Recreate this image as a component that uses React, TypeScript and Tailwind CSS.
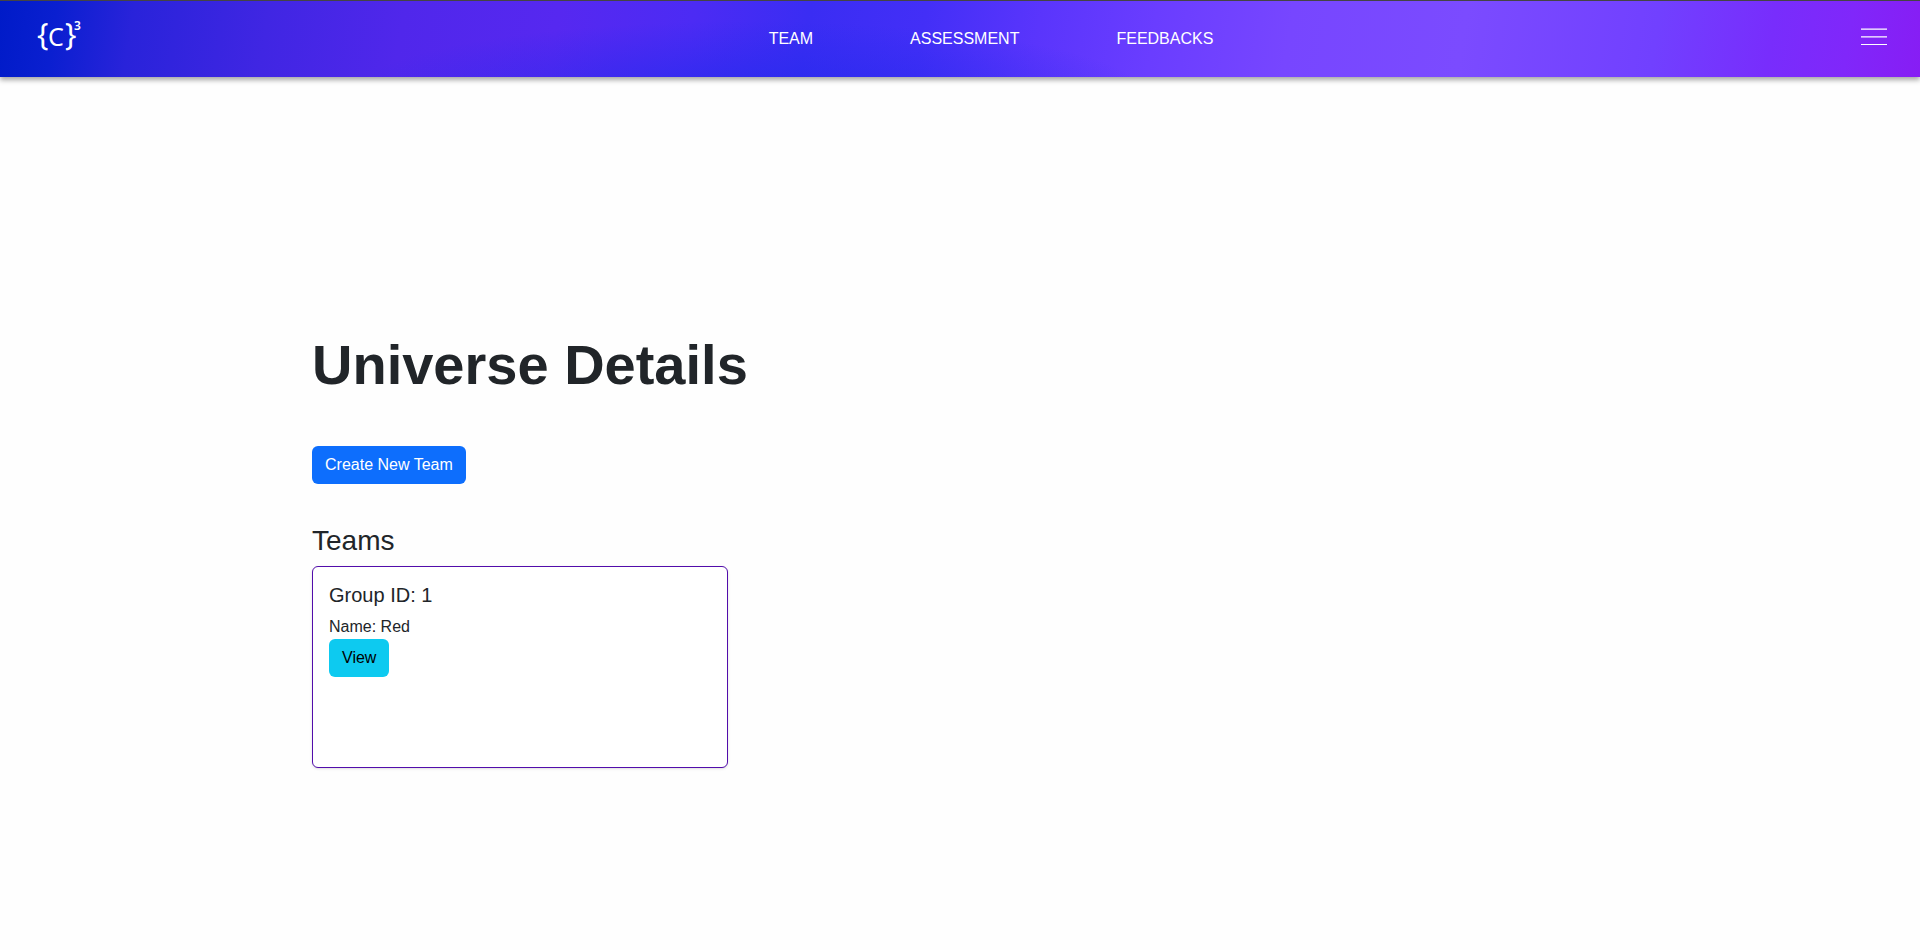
const links = ["Team", "Assessment", "Feedbacks"];

function Logo() {
  return (
    <a href="#home" aria-label="C cubed home" className="ml-9 w-[85px] text-white">
      <svg viewBox="0 -10 48 60" className="h-[60px] w-12 overflow-visible" fill="currentColor" fontFamily="'Noto Sans', sans-serif">
        <text x="1" y="26" fontSize="30" fontWeight="400">{"{"}</text>
        <text x="12" y="27" fontSize="25" fontWeight="400">C</text>
        <text x="29" y="26" fontSize="30" fontWeight="400">{"}"}</text>
        <text x="38" y="11" fontSize="12" fontWeight="600">3</text>
      </svg>
    </a>
  );
}

function Header() {
  return (
    <header className="flex h-[77px] items-center justify-between border-t border-[#444] bg-[radial-gradient(ellipse_400px_75px_at_39%_125%,#262aedcc_0%,#262aed00_100%),linear-gradient(99deg,#001bc8_0%,#0a1fd0_3%,#2923da_7%,#4026e3_14%,#5027eb_21%,#5628f0_29%,#4c2bf4_36%,#3a2df3_42%,#432ff7_48%,#5a35fc_54%,#6a3dff_60%,#7746ff_67%,#7b4bff_76%,#7140ff_86%,#782dfc_92%,#8027fa_96%,#871df4_100%)] shadow-[0_3px_5px_0_rgba(0,0,0,0.35)]">
      <Logo />
      <nav className="flex gap-[97px] text-base uppercase text-white">
        {links.map((label) => (
          <a key={label} href={"#" + label.toLowerCase()}>
            {label}
          </a>
        ))}
      </nav>
      <button type="button" aria-label="Open menu" className="mr-[33px] mb-1 text-white">
        <svg viewBox="0 0 26 18" className="block h-[18px] w-[26px]" stroke="currentColor" strokeWidth="1.2">
          <path d="M0 1.1H26M0 8.8H26M0 16.5H26" />
        </svg>
      </button>
    </header>
  );
}

export default function App() {
  return (
    <div className="flex min-h-screen flex-col bg-[#fefefe] font-['Liberation_Sans',Arial,sans-serif] text-base text-[#212529]">
      <Header />
      <main className="mx-auto w-full max-w-[1320px] px-3 pt-[254px] pb-12">
        <h1 className="text-[56px] leading-[67px] font-bold">Universe Details</h1>
        <button type="button" className="mt-12 rounded-md bg-[#0d6efd] px-[13px] py-[7px] leading-6 text-white">
          Create New Team
        </button>
        <h2 className="mt-10 mb-2 text-[28px] leading-[34px]">Teams</h2>
        <div className="grid grid-cols-1 gap-6 md:grid-cols-3">
          <article className="min-h-[202px] rounded-md border border-[#520dab] bg-white p-4 shadow-sm">
            <h3 className="mb-2 text-xl leading-6">Group ID: 1</h3>
            <p className="leading-6">Name: Red</p>
            <button type="button" className="rounded-md bg-[#0dcaf0] px-[13px] py-[7px] leading-6 text-black">
              View
            </button>
          </article>
        </div>
      </main>
    </div>
  );
}
